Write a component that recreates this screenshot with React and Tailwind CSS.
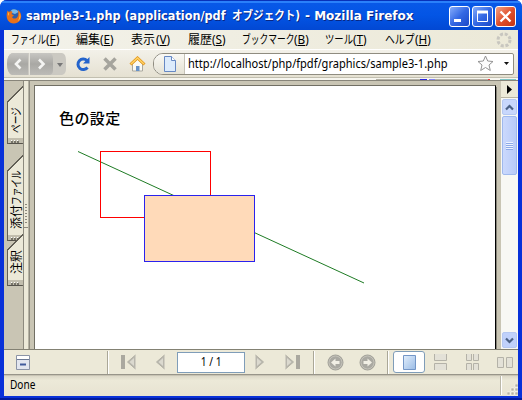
import React from "react";

function Menu({ kana, scale, kanaWidth, letter, width }) {
  return (
    <div className={`flex shrink-0 whitespace-nowrap ${width}`}>
      <span className={`shrink-0 ${kanaWidth}`}>
        <span className={`inline-block origin-left ${scale}`}>{kana}</span>
      </span>
      <span className="inline-block origin-left scale-x-[0.98]">(<span className="underline underline-offset-1">{letter}</span>)</span>
    </div>
  );
}

function SideTab({ kanji, kana, box, text, height }) {
  return (
    <div className={`relative w-[19px] shrink-0 ${box}`}>
      <svg className="absolute inset-0" width="19" height={height} shapeRendering="crispEdges">
        <path d={`M19 .5 L3.5 16 V${height - 1.5} H19Z`} fill="#ece9d8" />
        <path d={`M4 ${height - 7} H19 V${height - 2} H4Z`} fill="#c2beae" />
        <path d={`M19 .5 L3.5 16 V${height - 1.5} H19`} fill="none" stroke="#625f55" />
        <path d={`M5 ${height - 1.5} H18`} stroke="#56534b" strokeWidth="1" />
        <path d={`M7 ${height - 3.5} h2 m1 0 h2 m1 0 h2`} stroke="#77746a" strokeWidth="2" />
        <path d={`M7 ${height - 4.5} h1 m2 0 h1 m2 0 h1`} stroke="#fff" />
      </svg>
      <div className={`absolute left-[6px] flex w-[14px] rotate-180 text-[12px] leading-[14px] whitespace-nowrap [writing-mode:vertical-rl] [text-orientation:sideways] ${text}`}>
        {kanji && <span>{kanji}</span>}
        {kana && <span className="inline-block origin-top scale-y-[0.72]">{kana}</span>}
      </div>
    </div>
  );
}

function WinButton({ kind }) {
  const bg = kind === "close"
    ? "bg-linear-to-br from-[#f0a084] via-[#e0502c] to-[#c43412]"
    : "bg-linear-to-br from-[#86abfa] via-[#3468e4] to-[#1c48c8]";
  return (
    <div className={`h-[21px] w-[21px] rounded-[3px] border border-white ${bg}`}>
      <svg width="19" height="19" fill="none" stroke="#fff">
        {kind === "min" && <path d="M4 13.5h7" strokeWidth="3" />}
        {kind === "max" && <><path d="M4.5 4v10.500h10V4" strokeWidth="1" /><path d="M4 5h11" strokeWidth="3" /></>}
        {kind === "close" && <path d="M4.500 4.500l10 10M14.500 4.500l-10 10" strokeWidth="2.300" />}
      </svg>
    </div>
  );
}

function Firefox() {
  return (
    <svg width="16" height="16" viewBox="0 0 16 16">
      <circle cx="8" cy="8" r="7" fill="#2b5fae" />
      <path d="M5 2.500C7 .5 11 1 12.500 4L9 6 6 5Z" fill="#78b9e8" />
      <path d="M1.500 2.500 3 4C4 3 6 3 6.500 4L5.500 6 8 7.500 6 9C7 11 10 11 11.500 9 13 7 12 4 12 2 15 4 16 8 14.500 11.500 12 16 5 17 2 12.500 0 9 .5 5 1.500 2.500Z" fill="#e8711a" />
      <path d="M13 4C15 7 15 11 12 13 14 9 14 6 13 4M2 4 3 6 2 8Z" fill="#ffc94a" />
    </svg>
  );
}

function Divider() {
  return <div className="h-[23px] w-[2px] shrink-0 border-l border-[#aaa797] bg-white" />;
}

function PageArrow({ flip, bar }) {
  return (
    <svg width="16" height="16" viewBox="0 0 16 16" className={`shrink-0 ${flip ? "-scale-x-100" : ""}`}>
      {bar && <path d="M1 1h4v14H1z" fill="#aaa89f" />}
      <path d="M15.500 1v14L7.500 8Z" fill="#b8b6ad" />
      <path d="M14 4v8L9.500 8Z" fill="#dbd9cf" />
      <path d="M15.500 1 7.500 8l8 7" fill="none" stroke="#b3b1a6" />
    </svg>
  );
}

function RoundArrow({ right }) {
  return (
    <svg width="17" height="17" viewBox="0 0 17 17" className={`shrink-0 ${right ? "-scale-x-100" : ""}`}>
      <circle cx="8.500" cy="8.500" r="7.500" fill="#aaa9a2" stroke="#a09f97" />
      <circle cx="8.500" cy="8.500" r="6.500" fill="none" stroke="#c5c3ba" />
      <path d="M4 8.500 8.500 4.500v2.500h4v3h-4v2.500Z" fill="#f1efe5" />
    </svg>
  );
}

function Toolbar() {
  return (
    <div className="flex h-[28px] shrink-0 items-center border-t border-white bg-linear-to-b from-[#f3f1e9] to-[#e5e1d2] pl-[3px]">
      <svg width="60" height="26" viewBox="0 0 60 26" className="shrink-0">
        <defs>
          <linearGradient id="nav" x2="0" y2="1"><stop stopColor="#c7c6c2" /><stop offset=".5" stopColor="#a9a8a4" /><stop offset="1" stopColor="#bcbbb7" /></linearGradient>
        </defs>
        <path d="M5 2H55Q59 3 59 9V18Q59 23 55 24H5Q0 22 0 13T5 2" fill="#cbc9c2" />
        <path d="M5 2H21V24H5Q0 22 0 13T5 2" fill="url(#nav)" />
        <path d="M23 2H43Q46 3 46 8V19Q46 23 43 24H23Z" fill="url(#nav)" />
        <path d="M22.500 2V24" stroke="#e4e2db" />
        <path d="M13.500 8.500l-4.500 4.500 4.500 4.500M32 8.500l4.500 4.500-4.500 4.500" stroke="#f4f4f2" strokeWidth="2.600" fill="none" />
        <path d="M50 12h6l-3 4Z" fill="#777" />
      </svg>
      <svg width="16" height="16" viewBox="0 0 16 16" className="ml-[8px] shrink-0">
        <path d="M12.500 11.500A5.300 5.300 0 1 1 12 4.500" fill="none" stroke="#2464cc" strokeWidth="3" />
        <path d="M14.500 1v6.500H8Z" fill="#2464cc" />
      </svg>
      <svg width="16" height="16" viewBox="0 0 16 16" className="ml-[11px] shrink-0"><path d="M2.500 2.500l11 11M13.500 2.500l-11 11" stroke="#a5a49d" strokeWidth="3.500" /></svg>
      <svg width="17" height="16" viewBox="0 0 17 16" className="ml-[11px] shrink-0">
        <path d="M3.500 8v7h10V8l-5-5Z" fill="#faf9f2" stroke="#a9a79e" />
        <path d="M7 15v-5h3.500v5Z" fill="#6792c8" />
        <path d="M1.500 8.500 8.500 2l7 6.500" fill="none" stroke="#e3971e" strokeWidth="3" />
        <path d="M2 8 8.500 2l6.500 6" fill="none" stroke="#ffd264" strokeWidth="1.500" />
      </svg>
      <div className="ml-[7px] flex h-[22px] w-[361px] shrink-0 items-center overflow-hidden rounded-l-[10px] rounded-r-[2px] border border-[#8f8c80] bg-white">
        <div className="flex h-full w-[31px] shrink-0 items-center justify-end border-r border-[#c5c2b7] bg-linear-to-b from-[#faf9f4] to-[#e5e2d5] pr-[7px]">
          <svg width="14" height="16"><path d="M1.500.5h7l4 4v11h-11Z" fill="#dcebfc" stroke="#6688c3" /><path d="M8.500.5v4h4" fill="#fff" stroke="#6688c3" /></svg>
        </div>
        <div className="w-[292px] pl-[3px] text-[12px] whitespace-nowrap"><span className="inline-block origin-left scale-x-[0.922]">http://localhost/php/fpdf/graphics/sample3-1.php</span></div>
        <svg width="17" height="17" viewBox="0 0 17 17" className="shrink-0"><path d="M8.500 1l2.200 5 5.300.5-4 3.500 1.300 5.500-4.800-3-4.800 3L5 10 1 6.500 6.300 6Z" fill="#fbfbfb" stroke="#929292" /></svg>
        <svg width="5" height="3" className="ml-[10px] shrink-0"><path d="M0 0h5L2.500 3Z" fill="#111" /></svg>
      </div>
    </div>
  );
}

function Drawing() {
  return (
    <svg width="300" height="140" className="mt-[20px] ml-[42px] block">
      <path d="M1 3.500 287 135" stroke="#1e7b24" strokeWidth="1" />
      <path d="M23.500 3.500h110v66h-110Z" fill="none" stroke="#f00" shapeRendering="crispEdges" />
      <path d="M67.500 47.500h110v66h-110Z" fill="#ffdab9" stroke="#2a22ee" shapeRendering="crispEdges" />
    </svg>
  );
}

function Scrollbar() {
  return (
    <div className="flex w-[17px] shrink-0 flex-col items-center bg-[#f8f8f4]">
      <div className="flex h-[17px] w-full shrink-0 items-center justify-center border-b border-[#b9b5a2] bg-[#ece9d8]"><svg width="5" height="9"><path d="M0 0v9l5-4.500Z" /></svg></div>
      <div className="mt-px flex h-[16px] w-[15px] shrink-0 items-center justify-center rounded-[2px] border border-[#b5c8f2] bg-[#c8d7fc]"><svg width="9" height="7"><path d="M1 5.500 4.500 2 8 5.500" fill="none" stroke="#4b6185" strokeWidth="2.200" /></svg></div>
      <div className="mt-px flex h-[59px] w-[15px] shrink-0 flex-col items-center justify-center gap-px rounded-[2px] border border-[#9fb9ee] bg-linear-to-r from-[#cbd9fd] to-[#b8cbf8]">
        {[0, 1, 2, 3].map((i) => <div key={i} className="h-px w-[7px] bg-[#edf3ff] shadow-[0_1px_0_#8ca9e8]" />)}
      </div>
      <div className="mt-auto mb-px flex h-[16px] w-[15px] shrink-0 items-center justify-center rounded-[2px] border border-[#b5c8f2] bg-[#c0d1fb]"><svg width="9" height="7"><path d="M1 1.500 4.500 5 8 1.500" fill="none" stroke="#4b6185" strokeWidth="2.200" /></svg></div>
    </div>
  );
}

function Content() {
  return (
    <div className="flex h-[269px] shrink-0 border-t border-[#88857a]">
      <div className="flex w-[19px] shrink-0 flex-col bg-[#c9c5b4] pt-[5px]">
        <SideTab kana="ページ" box="h-[59px]" height={59} text="top-[11px] h-[36px]" />
        <SideTab kanji="添付" kana="ファイル" box="mt-[10px] h-[87px]" height={87} text="top-[13px] h-[61px]" />
        <SideTab kanji="注釈" box="-mt-[8px] h-[53px]" height={53} text="top-[16px] h-[24px]" />
      </div>
      <div className="flex w-[6px] shrink-0 flex-col border-x border-l-[#8d8a7e] border-r-[#b5b2a3] bg-[#ece9d8] pt-[123px]">
        <div className="flex h-[24px] flex-col items-center gap-[2px] border-b border-[#8d8a7e]">
          {[0, 1, 2, 3, 4, 5, 6].map((i) => <div key={i} className="h-px w-[2px] bg-[#8b887c]" />)}
        </div>
      </div>
      <div className="w-[472px] shrink-0 border-l border-[#8d8a7e] bg-[#c9c5b4] pt-[4px] pl-[4px]">
        <div className="h-full w-[462px] border-t border-r border-l border-t-[#716f64] border-r-black border-l-[#716f64] bg-white pt-[22px] shadow-[1px_2px_0_#858277]">
          <div className="h-[20px] pl-[24px] text-[15px] leading-[20px] font-medium tracking-[0.4px]">色の設定</div>
          <Drawing />
        </div>
      </div>
      <Scrollbar />
    </div>
  );
}

function PdfBar() {
  return (
    <div className="relative flex h-[26px] shrink-0 items-center border-t border-b border-t-[#838173] border-b-[#98958a] bg-[#ece9d8]">
      <svg width="14" height="15" className="ml-[12px] shrink-0"><path d="M.5.500h13v14H.5Z" fill="#e2e6ef" stroke="#8b94a6" /><path d="M1 1h12v3H1Z" fill="#fff" /><path d="M1 4.500h12" stroke="#6b7994" /><path d="M4 9.500h6" stroke="#405b9c" strokeWidth="2" /></svg>
      <div className="ml-[77px]"><Divider /></div>
      <div className="ml-[11px] flex w-[45px] shrink-0 justify-between"><PageArrow bar /><PageArrow /></div>
      <div className="ml-[12px] flex h-[21px] w-[68px] shrink-0 items-center justify-center border border-[#7f9db9] bg-white text-[12px]"><span className="inline-block scale-x-[0.85]">1 / 1</span></div>
      <div className="ml-[10px] flex w-[46px] shrink-0 justify-between"><PageArrow flip /><PageArrow flip bar /></div>
      <div className="ml-[12px]"><Divider /></div>
      <div className="ml-[12px] flex w-[49px] shrink-0 justify-between"><RoundArrow /><RoundArrow right /></div>
      <div className="ml-[11px]"><Divider /></div>
      <div className="ml-[4px] flex h-[22px] w-[32px] shrink-0 items-center justify-center rounded-[3px] border border-[#7f9db9] bg-white">
        <svg width="13" height="15"><defs><linearGradient id="pg" x2="1" y2="1"><stop stopColor="#e2effc" /><stop offset="1" stopColor="#9abbe5" /></linearGradient></defs><path d="M.5.500h12v14H.5Z" fill="url(#pg)" stroke="#7396c7" /></svg>
      </div>
      <svg width="80" height="16" className="ml-[9px] shrink-0" fill="#e3e1d7" stroke="#b4b2a8">
        <path d="M.5 0V6.500H12.500V0M.5 16V9.500H12.500V16" />
        <path d="M32.500 0V6.500H37.500V0M39.500 0V6.500H44.500V0M32.500 16V9.500H37.500V16M39.500 16V9.500H44.500V16" />
        <path d="M63.500 3.500h6v10h-6ZM72.500 3.500h6v10h-6Z" />
      </svg>
    </div>
  );
}

export default function App() {
  return (
    <div className="flex h-[400px] w-[522px] flex-col overflow-hidden rounded-t-[7px] bg-[#0831d9] font-['Noto_Sans','Noto_Sans_CJK_JP',sans-serif] text-[12px] text-black shadow-[inset_0_-2px_0_#001a9e]">
      <div className="flex h-[30px] shrink-0 items-center bg-linear-to-b from-[#0a59e8] via-[#0355e5] to-[#0248d3] pt-[2px] pl-[6px] shadow-[inset_0_1px_0_#0831b9,inset_0_3px_0_#2a80fa]">
        <Firefox />
        <div className="flex w-[427px] shrink-0 pl-[4px] font-['DejaVu_Sans','Noto_Sans_CJK_JP',sans-serif] text-[12px] font-bold whitespace-nowrap text-white [text-shadow:1px_1px_0_#0a2680]">
          <span className="w-[206px] shrink-0"><span className="inline-block origin-left scale-x-[0.94]">sample3-1.php (application/pdf</span></span>
          <span className="w-[73px] shrink-0"><span className="inline-block origin-left scale-x-[0.88]">オブジェクト)</span></span>
          <span><span className="inline-block origin-left">- Mozilla Firefox</span></span>
        </div>
        <div className="flex gap-[2px]"><WinButton kind="min" /><WinButton kind="max" /><WinButton kind="close" /></div>
      </div>
      <div className="mx-[4px] flex h-[366px] w-[514px] shrink-0 flex-col bg-[#ece9d8]">
        <div className="flex h-[19px] shrink-0 items-center bg-linear-to-r from-[#f3f2ea] to-[#ece9d8] pl-[7px]">
          <Menu kana="ファイル" scale="scale-x-[0.73]" kanaWidth="w-[35px]" letter="F" width="w-[65px]" />
          <Menu kana="編集" scale="scale-x-100" kanaWidth="w-[24px]" letter="E" width="w-[55px]" />
          <Menu kana="表示" scale="scale-x-100" kanaWidth="w-[25px]" letter="V" width="w-[57px]" />
          <Menu kana="履歴" scale="scale-x-100" kanaWidth="w-[24px]" letter="S" width="w-[54px]" />
          <Menu kana="ブックマーク" scale="scale-x-[0.73]" kanaWidth="w-[52px]" letter="B" width="w-[83px]" />
          <Menu kana="ツール" scale="scale-x-[0.78]" kanaWidth="w-[28px]" letter="T" width="w-[60px]" />
          <Menu kana="ヘルプ" scale="scale-x-[0.82]" kanaWidth="w-[30px]" letter="H" width="w-[111px]" />
          <svg width="16" height="16"><circle cx="8" cy="8" r="6" fill="none" stroke="#c8c6bf" strokeWidth="3" strokeDasharray="3 1.712" /></svg>
        </div>
        <Toolbar />
        <div className="flex h-[3px] shrink-0 items-center border-t border-[#c2bfb0] bg-[#f7f6ef]">
          <div className="ml-[372px] h-px w-[44px] bg-[#b5b2a6]" />
          <div className="h-px w-[7px] bg-[#2925dd]" />
          <div className="ml-[2px] h-px w-[6px] bg-[#8182f0]" />
          <div className="h-px w-[53px] bg-[#b5b2a6]" />
          <div className="h-px w-[2px] bg-[#f04040]" />
          <div className="ml-[10px] h-px w-[16px] bg-[#7fc4c4]" />
        </div>
        <Content />
        <PdfBar />
        <div className="flex h-[21px] shrink-0 bg-linear-to-b from-[#d9d5c5] via-[#ece9d8] via-25% to-[#e7e3d2] pl-[6px] leading-[20px] shadow-[inset_0_1px_0_#c8c4b4]">
          <span className="w-[459px]"><span className="inline-block origin-left scale-x-[0.84]">Done</span></span>
          <div className="mt-[1px] ml-[31px] h-[19px] w-[2px] border-l border-[#bbb8a9] bg-white" />
          <svg width="11" height="12" className="mt-[9px] ml-[5px]"><path d="M8 0h3v3H8zM4 4h3v3H4zM8 4h3v3H8zM0 8h3v3H0zM4 8h3v3H4zM8 8h3v3H8z" fill="#b8b4a2" stroke="#fff" strokeWidth=".5" /></svg>
        </div>
      </div>
    </div>
  );
}
